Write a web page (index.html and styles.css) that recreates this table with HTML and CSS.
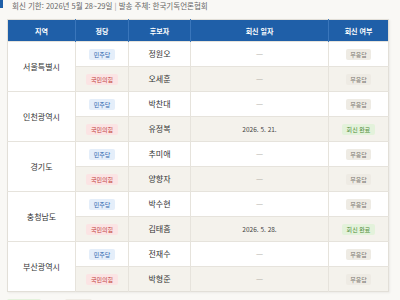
FILE: index.html
```html
<!DOCTYPE html>
<html lang="ko">
<head>
<meta charset="utf-8">
<link rel="stylesheet" href="styles.css">
</head>
<body>
<div class="page">
  <div class="intro">
    <span class="bar"></span>
    <p class="meta">회신 기한: 2026년 5월 28~29일 <span class="sep">|</span> 발송 주체: 한국기독언론협회</p>
  </div>
  <table class="grid">
    <colgroup>
      <col class="c-region"><col class="c-party"><col class="c-name"><col class="c-date"><col class="c-status">
    </colgroup>
    <thead>
      <tr><th>지역</th><th>정당</th><th>후보자</th><th>회신 일자</th><th>회신 여부</th></tr>
    </thead>
    <tbody>
      <tr><td class="region" rowspan="2">서울특별시</td><td><span class="chip dem">민주당</span></td><td class="name">정원오</td><td class="date dash">—</td><td><span class="chip none">무응답</span></td></tr>
      <tr class="alt"><td><span class="chip ppp">국민의힘</span></td><td class="name">오세훈</td><td class="date dash">—</td><td><span class="chip none">무응답</span></td></tr>
      <tr><td class="region" rowspan="2">인천광역시</td><td><span class="chip dem">민주당</span></td><td class="name">박찬대</td><td class="date dash">—</td><td><span class="chip none">무응답</span></td></tr>
      <tr class="alt"><td><span class="chip ppp">국민의힘</span></td><td class="name">유정복</td><td class="date">2026. 5. 21.</td><td><span class="chip done">회신 완료</span></td></tr>
      <tr><td class="region" rowspan="2">경기도</td><td><span class="chip dem">민주당</span></td><td class="name">추미애</td><td class="date dash">—</td><td><span class="chip none">무응답</span></td></tr>
      <tr class="alt"><td><span class="chip ppp">국민의힘</span></td><td class="name">양향자</td><td class="date dash">—</td><td><span class="chip none">무응답</span></td></tr>
      <tr><td class="region" rowspan="2">충청남도</td><td><span class="chip dem">민주당</span></td><td class="name">박수현</td><td class="date dash">—</td><td><span class="chip none">무응답</span></td></tr>
      <tr class="alt"><td><span class="chip ppp">국민의힘</span></td><td class="name">김태흠</td><td class="date">2026. 5. 28.</td><td><span class="chip done">회신 완료</span></td></tr>
      <tr><td class="region" rowspan="2">부산광역시</td><td><span class="chip dem">민주당</span></td><td class="name">전재수</td><td class="date dash">—</td><td><span class="chip none">무응답</span></td></tr>
      <tr class="alt"><td><span class="chip ppp">국민의힘</span></td><td class="name">박형준</td><td class="date dash">—</td><td><span class="chip none">무응답</span></td></tr>
    </tbody>
  </table>
  <div class="legend" aria-hidden="true">
    <span class="swatch done-sw"></span>
    <span class="swatch none-sw"></span>
  </div>
</div>
</body>
</html>
```

FILE: styles.css
```css
* { box-sizing: border-box; }
html, body { margin: 0; padding: 0; }
body {
  background: #f9f8f5;
  font-family: "Noto Sans CJK KR", "Noto Sans", sans-serif;
  color: #333;
  width: 400px;
  height: 300px;
  overflow: hidden;
}
.page { padding: 0 12px 0 7px; }
.intro {
  display: flex;
  align-items: flex-start;
  height: 19px;
  margin-left: -7px;
}
.bar {
  width: 2.5px;
  height: 7.5px;
  background: #1f5fa8;
  flex: none;
}
.meta {
  margin: 0 0 0 9.5px;
  font-size: 7.5px;
  line-height: 11px;
  color: #666;
  white-space: nowrap;
}
.sep { color: #999; }
.grid {
  width: 381px;
  border-collapse: collapse;
  table-layout: fixed;
  background: #fff;
  box-shadow: 1px 1px 2px rgba(0,0,0,0.06);
  border: 1px solid #e2dfd8;
}
.c-region { width: 68px; }
.c-party { width: 53px; }
.c-name { width: 62px; }
.c-date { width: 138px; }
.c-status { width: 60px; }
th {
  height: 22px;
  padding: 0;
  background: #1f5fa8;
  color: #fff;
  font-size: 7px;
  font-weight: 700;
  text-align: center;
  border-left: 1px solid #3a76bb;
}
th:first-child { border-left: none; }
td {
  height: 25px;
  padding: 0;
  text-align: center;
  vertical-align: middle;
  border-top: 1px solid #e6e3dc;
  border-left: 1px solid #e6e3dc;
  font-size: 7.5px;
  line-height: 1;
}
.alt td { background: #f4f2ec; }
.alt td.region { background: #fff; }
td.region { color: #333; font-size: 8px; border-left: none; background: #fff; }
.name { color: #333; font-size: 8px; }
.date { color: #444; font-size: 6.5px; }
.date.dash { color: #b3b0a8; font-size: 8px; }
.chip {
  display: inline-block;
  font-size: 6px;
  line-height: 11px;
  height: 11px;
  padding: 0 4.5px;
  border-radius: 2px;
  white-space: nowrap;
}
.dem { background: #e4eefa; color: #2c63ad; }
.ppp { background: #fbe4e4; color: #c2403c; }
.none { background: #eeebe4; color: #7a776f; }
.done { background: #e3f2db; color: #4d8a34; }
.legend {
  display: flex;
  gap: 24px;
  margin-top: 7px;
}
.swatch { display: block; height: 12px; border-radius: 2px; }
.done-sw { width: 34px; background: #e3f2db; }
.none-sw { width: 27px; background: #eeebe4; }
```
